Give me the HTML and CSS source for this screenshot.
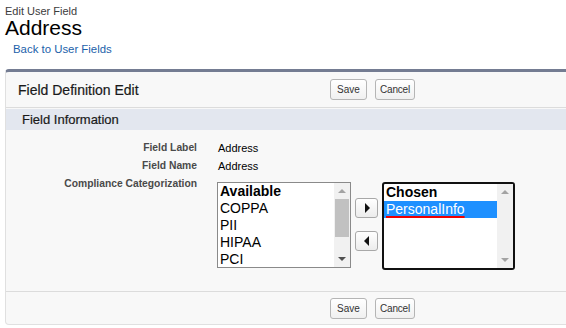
FILE: index.html
```html
<!DOCTYPE html>
<html>
<head>
<meta charset="utf-8">
<link rel="stylesheet" href="styles.css">
</head>
<body>
<div class="page">
  <div class="bpage">
    <div class="crumb">Edit User Field</div>
    <h1 class="title">Address</h1>
    <a class="back" href="#">Back to User Fields</a>
  </div>
  <div class="panel">
    <div class="panel-head">
      <div class="panel-title">Field Definition Edit</div>
      <div class="btns">
        <button class="btn save">Save</button>
        <button class="btn cancel">Cancel</button>
      </div>
    </div>
    <div class="section">Field Information</div>
    <div class="rows">
      <div class="row"><div class="lbl">Field Label</div><div class="val">Address</div></div>
      <div class="row"><div class="lbl">Field Name</div><div class="val">Address</div></div>
      <div class="row multi">
        <div class="lbl">Compliance Categorization</div>
        <div class="picker">
          <div class="listbox avail">
            <div class="items">
              <div class="opt head">Available</div>
              <div class="opt">COPPA</div>
              <div class="opt">PII</div>
              <div class="opt">HIPAA</div>
              <div class="opt">PCI</div>
            </div>
            <div class="sb">
              <div class="arr up"></div>
              <div class="thumb"></div>
              <div class="arr down"></div>
            </div>
          </div>
          <div class="moves">
            <div class="mv"><span class="tri right"></span></div>
            <div class="mv"><span class="tri left"></span></div>
          </div>
          <div class="listbox chosen">
            <div class="items">
              <div class="opt head">Chosen</div>
              <div class="opt sel"><span class="spell">PersonalInfo</span></div>
            </div>
            <div class="sb light">
              <div class="arr up"></div>
              <div class="space"></div>
              <div class="arr down"></div>
            </div>
          </div>
        </div>
      </div>
    </div>
    <div class="panel-foot">
      <div class="btns">
        <button class="btn save">Save</button>
        <button class="btn cancel">Cancel</button>
      </div>
    </div>
  </div>
</div>
</body>
</html>
```
FILE: styles.css
```css
html, body { margin: 0; padding: 0; background: #fff; }
body { font-family: "Liberation Sans", Arial, sans-serif; color: #222; overflow: hidden; }
.page { padding: 5px 0 0 5px; }
.bpage { height: 64px; }
.crumb { font-size: 11px; color: #3c3c3c; line-height: 12px; }
.title { font-size: 21px; font-weight: normal; margin: 0; line-height: 22px; color: #000; }
.back { display: inline-block; margin: 3px 0 0 8px; font-size: 11.4px; color: #1b5faa; text-decoration: none; line-height: 14px; }
.panel { width: 575px; background: #f8f8f8; border: 1px solid #e0e0e0; border-top: 3px solid #747c92; border-radius: 4px; box-sizing: border-box; }
.panel-head { display: flex; align-items: center; height: 35px; border-bottom: 1px solid #dcdcdc; }
.panel-title { width: 324px; padding-left: 12px; font-size: 14px; color: #1a1a1a; box-sizing: border-box; -webkit-text-stroke: 0.2px #1a1a1a; }
.btns { display: flex; gap: 8px; }
.btn { font-family: "Liberation Sans", Arial, sans-serif; font-size: 10px; color: #333; height: 21px; padding: 0; background: linear-gradient(#fff, #f0f0f0); border: 1px solid #b5b5b5; border-radius: 3px; line-height: 19px; text-align: center; box-sizing: border-box; }
.btn.save { width: 37px; }
.btn.cancel { width: 40px; letter-spacing: -0.2px; }
.section { margin-top: 1px; height: 21px; line-height: 21px; background: #e3e7ef; padding-left: 16px; font-size: 13px; color: #1a1a1a; -webkit-text-stroke: 0.2px #1a1a1a; }
.rows { padding-top: 11px; height: 162px; box-sizing: border-box; border-bottom: 1px solid #dcdcdc; }
.row { display: flex; height: 18px; font-size: 11px; line-height: 14px; }
.lbl { width: 191px; text-align: right; font-weight: bold; color: #4a4a4a; font-size: 10.3px; }
.val { padding-left: 21px; color: #000; font-size: 11px; }
.row.multi { height: auto; }
.picker { display: flex; margin-left: 20px; margin-top: 5px; align-items: flex-start; }
.listbox { display: flex; background: #fff; box-sizing: border-box; }
.avail { width: 134px; height: 86px; border: 1px solid #8a8a8a; }
.chosen { width: 133px; height: 88px; border: 2px solid #111; border-radius: 3px; margin-left: 4px; }
.items { flex: 1; padding-left: 2px; }
.opt { font-size: 14px; line-height: 17px; height: 17px; color: #000; white-space: nowrap; }
.opt.head { font-weight: bold; }
.chosen .items { padding-left: 0; }
.chosen .opt { padding-left: 2px; }
.opt.sel { background: #1e90ff; color: #fff; }
.spell { text-decoration: underline; text-decoration-color: #e00; text-decoration-thickness: 2px; text-underline-offset: 2px; }
.sb { width: 16px; display: flex; flex-direction: column; background: #f1f1f1; }
.arr { height: 16px; position: relative; }
.arr::after { content: ""; position: absolute; left: 4px; border-left: 4px solid transparent; border-right: 4px solid transparent; }
.arr.up::after { top: 6px; border-bottom: 4px solid #a3a3a3; }
.arr.down::after { top: 6px; border-top: 4px solid #505050; }
.sb.light .arr.down::after { border-top-color: #a3a3a3; }
.thumb { height: 38px; margin: 0 1px; background: #c1c1c1; }
.space { flex: 1; }
.sb .arr.down { margin-top: auto; }
.moves { display: flex; flex-direction: column; gap: 13px; margin-left: 4px; margin-top: 16px; }
.mv { width: 23px; height: 20px; border: 1px solid #a8a8a8; border-radius: 3px; background: linear-gradient(#fff, #ececec); display: flex; align-items: center; justify-content: center; box-sizing: border-box; }
.tri { width: 0; height: 0; border-top: 5px solid transparent; border-bottom: 5px solid transparent; }
.tri.right { border-left: 5px solid #111; margin-left: 1px; }
.tri.left { border-right: 5px solid #111; margin-right: 1px; }
.panel-foot { height: 32px; display: flex; align-items: center; padding-left: 324px; }
```
